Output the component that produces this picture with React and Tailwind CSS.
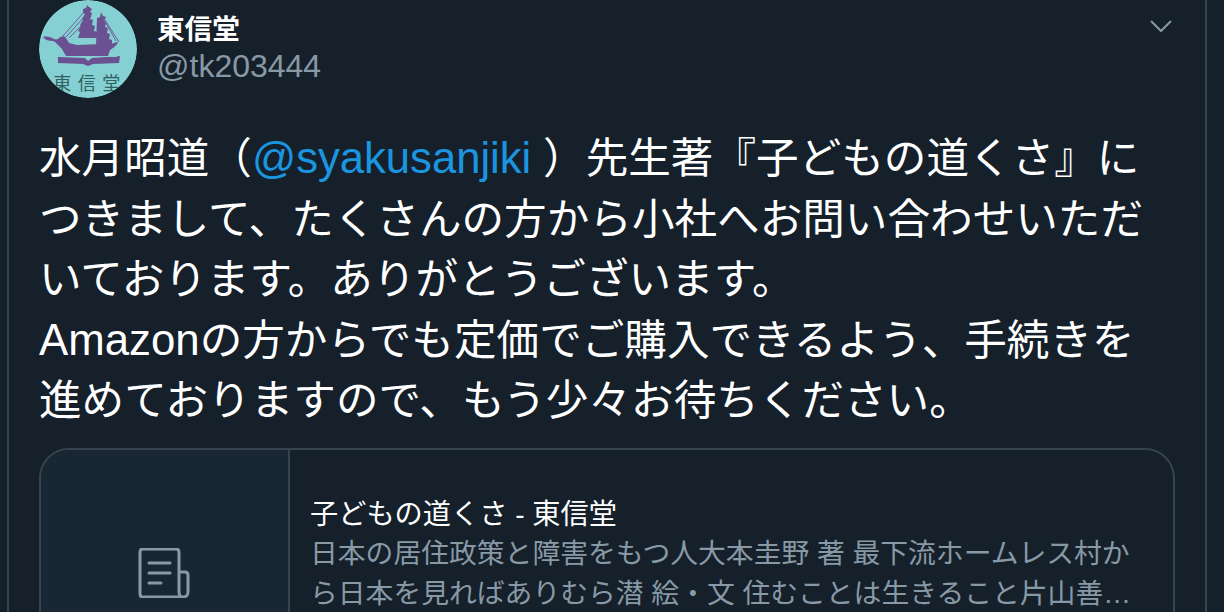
const font = { fontFamily: '"Liberation Sans", "Noto Sans CJK JP", sans-serif' };

// 東信堂の丸いアイコン(帆船のロゴ)
function Avatar() {
  return (
    <svg viewBox="0 0 98 98" className="w-[98px] h-[98px] shrink-0 rounded-full">
      <circle cx="49" cy="49" r="49" fill="#85d0d2" />
      <g fill="#6b5192">
        {/* 船体 */}
        <path d="M4 37c4-1 8 0 11 2 2 1 5 0 6-2l4-1 2 2 3 5 8 2 24-1 7 1 9-3 1 1c-2 3-5 5-8 7l-2 6H27l-4-7c-4-4-6-7-9-8-4 0-8-1-10-4z" />
        {/* 帆 */}
        <path d="M44 9l3-1 1-3 2 2 3 2-2 3 2 1-1 4-1 2 3 1-1 5 3 1-1 5 4 1-1 6H39l2-6-2-1 3-5-1-1 3-5-1-1 3-5-2-1z" />
        <path d="M58 18l3-1 1-5 2 4 3 1-2 4 2 2-1 4 3 1-1 5 3 1-1 5 3 1v5H57z" />
        {/* 本 */}
        <path d="M19 57l27 1 3 3 4-3 28-2-1 7-26 1-5 2-5-2-25-1z" />
      </g>
      <g stroke="#6b5192" strokeWidth="0.9" fill="none">
        <path d="M24 36L45 12M27 37L46 16M30 38L46 22M63 16L77 41M66 20L80 42" />
        <path d="M16 56.500h62" stroke="#85d0d2" />
      </g>
      <text x="51" y="90" textAnchor="middle" fill="#2f6163" fontSize="18" letterSpacing="6.500" fontFamily='"Noto Sans CJK JP", sans-serif'>東信堂</text>
    </svg>
  );
}

function Chevron() {
  return (
    <svg viewBox="0 0 24 12" className="w-[24px] h-[12px]" fill="none" stroke="#8899a6" strokeWidth="2">
      <path d="M2 1l10 10L22 1" />
    </svg>
  );
}

function NoteIcon() {
  return (
    <svg viewBox="0 0 52 50" className="w-[52px] h-[50px] -translate-x-[1px]" fill="none" stroke="#8899a6" strokeWidth="3" strokeLinecap="round" strokeLinejoin="round">
      <path d="M41 24h6c2 0 3 1 3 3v17c0 3-2 5-5 5H5c-2 0-3-1-3-3V4c0-2 1-3 3-3h33c2 0 3 1 3 3v40c0 3 2 5 4 5" />
      <path d="M11 15h21M11 25h21M11 35h12" />
    </svg>
  );
}

export default function App() {
  return (
    <div className="h-[612px] w-[1224px] overflow-hidden bg-[#15202b] text-white" style={font}>
      <div className="ml-[7px] mr-[17px] h-full border-x-2 border-[#38444d] pl-[30px] pr-[30px]">
        {/* ヘッダー */}
        <div className="flex h-[98px] items-start">
          <Avatar />
          <div className="ml-[20px] pt-[12px]">
            <div className="text-[27.6px] leading-[35px] font-bold">東信堂</div>
            <div className="text-[32px] leading-[38px] text-[#8899a6]">@tk203444</div>
          </div>
          <div className="ml-auto mt-[20px] mr-[2px]">
            <Chevron />
          </div>
        </div>

        {/* 本文 */}
        <div className="mt-[30px] text-[42.6px] leading-[60.500px] whitespace-nowrap">
          <p>水月昭道（<span className="text-[#1b95e0] text-[43.6px]">@syakusanjiki</span> ）先生著『子どもの道くさ』に</p>
          <p>つきまして、たくさんの方から小社へお問い合わせいただ</p>
          <p>いております。ありがとうございます。</p>
          <p><span className="text-[43.8px]">Amazon</span>の方からでも定価でご購入できるよう、手続きを</p>
          <p>進めておりますので、もう少々お待ちください。</p>
        </div>

        {/* リンクカード */}
        <div className="mt-[17px] flex h-[300px] overflow-hidden rounded-[30px] border-2 border-[#38444d]">
          <div className="flex w-[249px] shrink-0 justify-center border-r-2 border-[#38444d] bg-[#192734] pt-[98px]">
            <NoteIcon />
          </div>
          <div className="min-w-0 flex-1 pl-[20px] pr-[40px] pt-[44px] text-[27.8px] leading-[40px]">
            <div className="text-[28.2px] leading-[40px] whitespace-nowrap">子どもの道くさ - 東信堂</div>
            <div className="text-[#8899a6] whitespace-nowrap">
              <div>日本の居住政策と障害をもつ人大本圭野 著 最下流ホームレス村か</div>
              <div>ら日本を見ればありむら潜 絵・文 住むことは生きること片山善…</div>
            </div>
          </div>
        </div>
      </div>
    </div>
  );
}
